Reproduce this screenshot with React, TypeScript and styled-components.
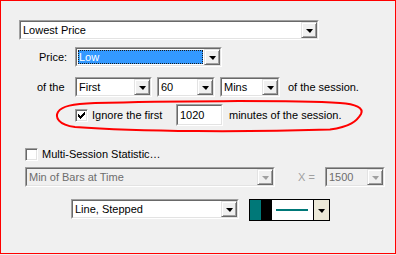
import React from "react";
import styled, { createGlobalStyle } from "styled-components";

const Global = createGlobalStyle`
  html, body { margin: 0; padding: 0; background: #f0f0f0; }
  * { box-sizing: border-box; }
`;

const Frame = styled.div`
  position: relative;
  width: 396px;
  height: 254px;
  border: 1px solid #ff0000;
  background: #f0f0f0;
  font-family: "Liberation Sans", Arial, sans-serif;
  font-size: 11px;
  color: #000;
  display: flex;
  flex-direction: column;
`;

const Row = styled.div<{ $left: number; $top: number; $gap?: number }>`
  display: flex;
  align-items: center;
  margin-left: ${(p) => p.$left}px;
  margin-top: ${(p) => p.$top}px;
  gap: ${(p) => p.$gap ?? 0}px;
  height: 20px;
  white-space: nowrap;
`;

const Label = styled.span<{ $w?: number; $muted?: boolean }>`
  display: inline-block;
  width: ${(p) => (p.$w ? `${p.$w}px` : "auto")};
  color: ${(p) => (p.$muted ? "#a0a0a0" : "#000")};
`;

const Sunken = styled.div<{ $w: number; $h?: number }>`
  width: ${(p) => p.$w}px;
  height: ${(p) => p.$h ?? 20}px;
  border: 1px solid;
  border-color: #a0a0a0 #ffffff #ffffff #a0a0a0;
  flex: none;
`;

const SunkenInner = styled.div<{ $bg?: string }>`
  width: 100%;
  height: 100%;
  border: 1px solid;
  border-color: #696969 #e3e3e3 #e3e3e3 #696969;
  background: ${(p) => p.$bg ?? "#ffffff"};
  display: flex;
  align-items: stretch;
`;

const Field = styled.div<{ $disabled?: boolean }>`
  flex: 1;
  display: flex;
  align-items: center;
  padding-left: 2px;
  color: ${(p) => (p.$disabled ? "#6d6d6d" : "#000")};
  overflow: hidden;
`;

const Selected = styled.div`
  flex: 1;
  margin: 1px;
  display: flex;
  align-items: center;
  padding-left: 1px;
  background: #3399ff;
  color: #fff;
  outline: 1px dotted #1a1a1a;
  outline-offset: -1px;
`;

const DropBtn = styled.div`
  width: 16px;
  flex: none;
  border: 1px solid;
  border-color: #e3e3e3 #696969 #696969 #e3e3e3;
  background: #f0f0f0;
  display: flex;
  align-items: center;
  justify-content: center;
  box-shadow: inset 1px 1px 0 #ffffff, inset -1px -1px 0 #a0a0a0;
`;

const Arrow = styled.div<{ $disabled?: boolean }>`
  width: 0;
  height: 0;
  border-left: 4px solid transparent;
  border-right: 3px solid transparent;
  border-top: 4px solid ${(p) => (p.$disabled ? "#a0a0a0" : "#000")};
  margin-top: 1px;
`;

const Check = styled.div`
  width: 13px;
  height: 13px;
  flex: none;
  border: 1px solid;
  border-color: #a0a0a0 #ffffff #ffffff #a0a0a0;
  box-shadow: inset 1px 1px 0 #696969, inset -1px -1px 0 #e3e3e3;
  background: #fff;
  display: flex;
  align-items: center;
  justify-content: center;
`;

const ColorBox = styled.div`
  width: 81px;
  height: 22px;
  border: 1px solid #000;
  display: flex;
  margin-top: 2px;
  flex: none;
`;

const Swatch = styled.div<{ $c: string }>`
  width: 11px;
  background: ${(p) => p.$c};
`;

const LineArea = styled.div`
  flex: 1;
  background: #fff;
  display: flex;
  align-items: center;
  justify-content: center;
  padding-right: 2px;
`;

const LineSample = styled.div`
  width: 32px;
  height: 2px;
  background: #007878;
`;

const ColorBtn = styled.div`
  width: 16px;
  background: #ece9d8;
  border-left: 1px solid #000;
  display: flex;
  align-items: center;
  justify-content: center;
`;

const Annotation = styled.svg`
  position: absolute;
  left: -1px;
  top: -1px;
  pointer-events: none;
`;

function Combo({
  w,
  text,
  selected,
  disabled,
}: {
  w: number;
  text: string;
  selected?: boolean;
  disabled?: boolean;
}) {
  return (
    <Sunken $w={w}>
      <SunkenInner $bg={disabled ? "#f0f0f0" : "#ffffff"}>
        {selected ? <Selected>{text}</Selected> : <Field $disabled={disabled}>{text}</Field>}
        <DropBtn>
          <Arrow $disabled={disabled} />
        </DropBtn>
      </SunkenInner>
    </Sunken>
  );
}

function CheckBox({ checked }: { checked?: boolean }) {
  return (
    <Check>
      {checked && (
        <svg width="7" height="7" viewBox="0 0 7 7" shapeRendering="crispEdges">
          <path
            d="M6 0h1v3h-1v1h-1v1h-1v1h-1v1h-1v-1h-1v-1h-1v-3h1v1h1v1h1v-1h1v-1h1z"
            fill="#000"
          />
        </svg>
      )}
    </Check>
  );
}

export default function App() {
  return (
    <>
      <Global />
      <Frame>
        <Row $left={18} $top={19}>
          <Combo w={300} text="Lowest Price" />
        </Row>
        <Row $left={38} $top={7}>
          <Label $w={36}>Price:</Label>
          <Combo w={147} text="Low" selected />
        </Row>
        <Row $left={36} $top={10} $gap={5}>
          <Label $w={33}>of the</Label>
          <Combo w={77} text="First" />
          <Combo w={58} text="60" />
          <Combo w={60} text="Mins" />
          <Label style={{ marginLeft: 3 }}>of the session.</Label>
        </Row>
        <Row $left={74} $top={8}>
          <CheckBox checked />
          <Label $w={84} style={{ marginLeft: 4 }}>Ignore the first</Label>
          <Sunken $w={47} $h={22}>
            <SunkenInner>
              <Field>1020</Field>
            </SunkenInner>
          </Sunken>
          <Label style={{ marginLeft: 6 }}>minutes of the session.</Label>
        </Row>
        <Row $left={24} $top={19}>
          <CheckBox />
          <Label style={{ marginLeft: 4 }}>Multi-Session Statistic…</Label>
        </Row>
        <Row $left={24} $top={3}>
          <Combo w={250} text="Min of Bars at Time" disabled />
          <Label $muted style={{ marginLeft: 23, width: 27 }}>X =</Label>
          <Combo w={60} text="1500" disabled />
        </Row>
        <Row $left={70} $top={12} $gap={10}>
          <Combo w={168} text="Line, Stepped" />
          <ColorBox>
            <Swatch $c="#007878" />
            <Swatch $c="#000000" />
            <LineArea>
              <LineSample />
            </LineArea>
            <ColorBtn>
              <Arrow />
            </ColorBtn>
          </ColorBox>
        </Row>
        <Annotation width="396" height="254" viewBox="0 0 396 254">
          <path
            d="M95 103 C160 101 290 100 340 103 C356 104 364 108 361 114 C357 121 350 127 330 129.5 C250 132 140 132 75 127 C58 125 55 117 58 112 C62 106 72 104 95 103"
            fill="none"
            stroke="#ff0000"
            strokeWidth="2"
          />
        </Annotation>
      </Frame>
    </>
  );
}
